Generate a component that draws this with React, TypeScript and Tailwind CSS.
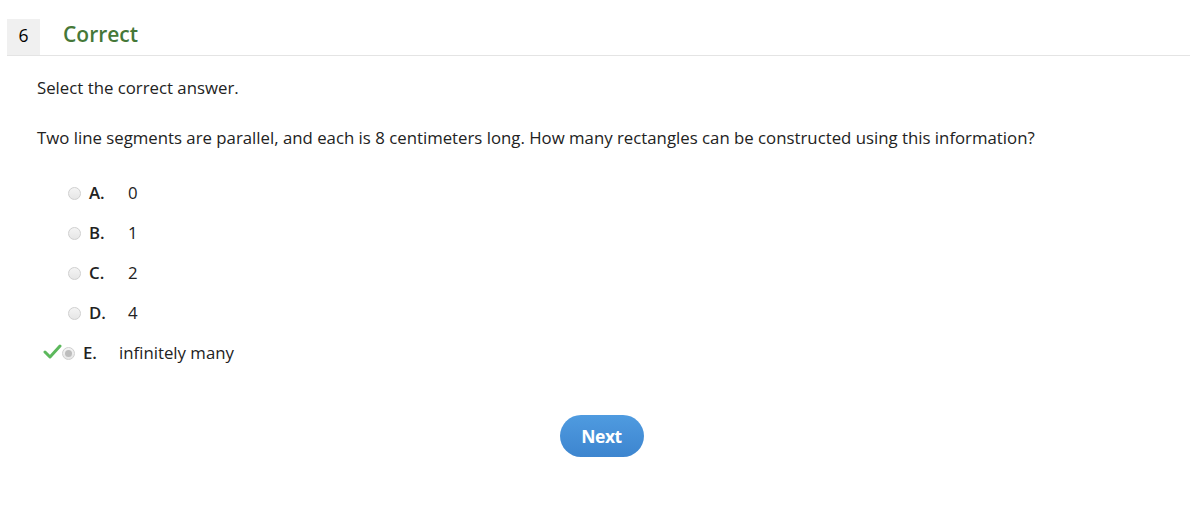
import React from 'react';

const options = [
  { letter: 'A.', value: '0' },
  { letter: 'B.', value: '1' },
  { letter: 'C.', value: '2' },
  { letter: 'D.', value: '4' },
];

const Radio: React.FC<{ checked?: boolean }> = ({ checked }) => (
  <span className="w-[13px] h-[13px] rounded-full border border-[#cfcfcf] bg-gradient-to-b from-[#f4f4f4] to-[#e6e6e6] flex items-center justify-center shrink-0">
    {checked && <span className="w-[7px] h-[7px] rounded-full bg-[#bdbdbd]" />}
  </span>
);

const App: React.FC = () => {
  return (
    <div className="w-[1190px] h-[518px] bg-white text-[#222] font-['Open_Sans',sans-serif] overflow-hidden">
      {/* header */}
      <div className="ml-[7px] mt-[19px] flex items-center border-b border-[#e4e4e4]">
        <div className="w-[33px] h-[36px] bg-[#f0f0f0] flex items-center justify-center pb-[3px] text-[17.5px] text-black">
          6
        </div>
        <h1 className="ml-[23px] pb-[5px] text-[21px] font-semibold text-[#457838] leading-none">Correct</h1>
      </div>

      {/* question */}
      <div className="pl-[37px] pt-[20px] text-[16.8px] leading-[24px]">
        <p>Select the correct answer.</p>
        <p className="mt-[26px]">
          Two line segments are parallel, and each is 8 centimeters long. How many rectangles can be constructed using this information?
        </p>
      </div>

      {/* options */}
      <div className="mt-[31px] flex flex-col gap-[16px] text-[16.8px] leading-[24px]">
        {options.map((o) => (
          <div key={o.letter} className="flex items-center pl-[68px]">
            <Radio />
            <span className="ml-[8px] w-[39px] font-semibold">{o.letter}</span>
            <span>{o.value}</span>
          </div>
        ))}
        <div className="flex items-center pl-[43px]">
          <svg width="19" height="15" viewBox="0 0 19 15" className="shrink-0 -mt-[3px]">
            <path d="M2 8 L7 13 L17 2" fill="none" stroke="#5cb85c" strokeWidth="3" strokeLinecap="round" strokeLinejoin="round" />
          </svg>
          <Radio checked />
          <span className="ml-[8px] w-[36px] font-semibold">E.</span>
          <span>infinitely many</span>
        </div>
      </div>

      {/* next */}
      <div className="mt-[50px] flex justify-center">
        <button className="ml-[13px] w-[84px] h-[42px] rounded-full bg-gradient-to-b from-[#4f9be0] to-[#3d85cf] text-white text-[17.5px] font-bold tracking-[-0.5px]">
          Next
        </button>
      </div>
    </div>
  );
};

export default App;
